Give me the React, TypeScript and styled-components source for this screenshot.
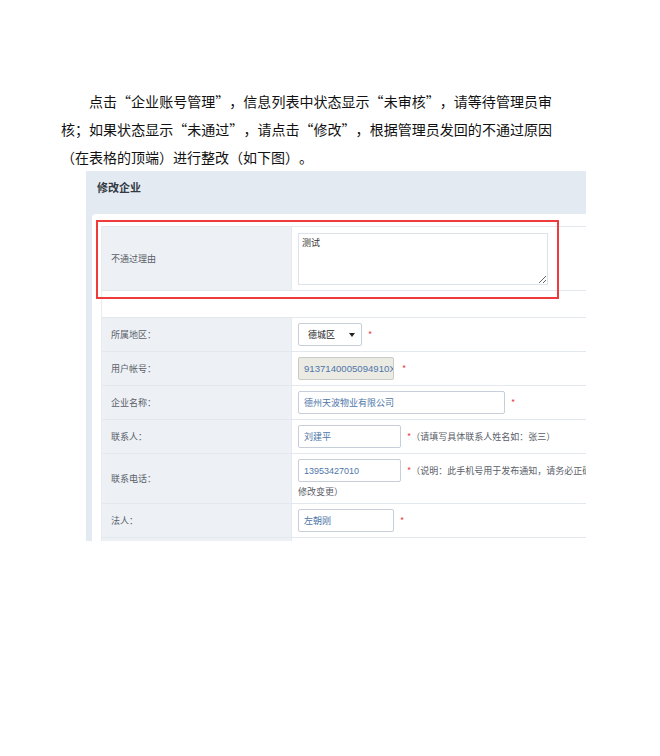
import styled, { createGlobalStyle } from "styled-components";

const GlobalStyle = createGlobalStyle`
  html, body {
    margin: 0;
    padding: 0;
    background: #ffffff;
  }
  body {
    font-family: "Noto Sans CJK SC", "Noto Sans", sans-serif;
    text-spacing-trim: space-all;
  }
`;

const Page = styled.div`
  width: 660px;
  min-height: 756px;
  padding-top: 87px;
  box-sizing: border-box;
`;

const Paragraph = styled.p`
  margin: 0 0 0 61px;
  width: 491px;
  font-size: 14px;
  line-height: 28px;
  text-indent: 28px;
  text-align: justify;
  color: #111;
`;

const Shot = styled.div`
  margin-left: 86px;
  width: 500px;
  height: 370px;
  overflow: hidden;
  background: #e4eaf2;
`;

const ShotHeader = styled.div`
  height: 43px;
  padding-left: 11px;
  box-sizing: border-box;
`;

const ShotTitle = styled.h3`
  margin: 0;
  font-size: 11px;
  line-height: 32px;
  font-weight: 700;
  color: #333a44;
`;

const Panel = styled.div`
  position: relative;
  margin-left: 6px;
  padding: 12px 0 0 9px;
  background: #ffffff;
  border-top-left-radius: 4px;
  height: 327px;
  box-sizing: border-box;
`;

const Highlight = styled.div`
  position: absolute;
  left: 4px;
  top: 6px;
  width: 463px;
  height: 79px;
  border: 2px solid #ef3b3b;
  box-sizing: border-box;
  pointer-events: none;
`;

const FormTable = styled.div`
  width: 640px;
  border-top: 1px solid #e3e7ee;
  border-left: 1px solid #e8ebf0;
`;

const Row = styled.div<{ $h: number }>`
  display: grid;
  grid-template-columns: 190px 1fr;
  min-height: ${(p) => p.$h}px;
  border-bottom: 1px solid #e3e7ee;
`;

const Label = styled.div<{ $blank?: boolean }>`
  display: flex;
  align-items: center;
  padding-left: 9px;
  background: ${(p) => (p.$blank ? "#ffffff" : "#edf1f6")};
  border-right: 1px solid ${(p) => (p.$blank ? "transparent" : "#e6e9ef")};
  font-size: 9px;
  color: #5a6068;
`;

const Value = styled.div<{ $col?: boolean }>`
  display: flex;
  flex-direction: ${(p) => (p.$col ? "column" : "row")};
  align-items: ${(p) => (p.$col ? "flex-start" : "center")};
  padding: 0 6px;
  padding-top: ${(p) => (p.$col ? "5px" : "0")};
  font-size: 9px;
  color: #5a6068;
`;

const Line = styled.div`
  display: flex;
  align-items: center;
  white-space: nowrap;
`;

const Reason = styled.textarea`
  width: 250px;
  height: 52px;
  margin: 0;
  padding: 3px 3px;
  box-sizing: border-box;
  border: 1px solid #dde3ec;
  font-family: "Noto Sans CJK SC", sans-serif;
  font-size: 9px;
  line-height: 12px;
  color: #333;
  resize: both;
  outline: none;
`;

const SelectBox = styled.div`
  display: flex;
  align-items: center;
  justify-content: space-between;
  width: 64px;
  height: 23px;
  padding: 0 6px 0 9px;
  box-sizing: border-box;
  border: 1px solid #c6ceda;
  border-radius: 2px;
  font-size: 9px;
  color: #222;

  &::after {
    content: "";
    border-left: 3px solid transparent;
    border-right: 3px solid transparent;
    border-top: 4px solid #222;
  }
`;

const Field = styled.div<{ $w: number; $disabled?: boolean; $size?: number }>`
  display: flex;
  align-items: center;
  width: ${(p) => p.$w}px;
  height: 23px;
  padding-left: 5px;
  box-sizing: border-box;
  overflow: hidden;
  white-space: nowrap;
  border: 1px solid ${(p) => (p.$disabled ? "#c9cbc6" : "#c6ceda")};
  border-radius: 2px;
  background: ${(p) => (p.$disabled ? "#ebebe4" : "#ffffff")};
  font-family: "Liberation Sans", "Noto Sans CJK SC", sans-serif;
  font-size: ${(p) => p.$size ?? 9}px;
  color: #4e76a9;
`;

const Star = styled.span<{ $gap?: number }>`
  margin-left: ${(p) => p.$gap ?? 6}px;
  color: #e84545;
  font-size: 9px;
`;

const Hint = styled.span`
  color: #5a6068;
  font-size: 9px;
`;

const Wrapped = styled.div`
  margin-top: 4px;
  line-height: 12px;
  color: #5a6068;
`;

export default function App() {
  return (
    <Page>
      <GlobalStyle />
      <Paragraph>
        点击“企业账号管理”，信息列表中状态显示“未审核”，请等待管理员审核；如果状态显示“未通过”，请点击“修改”，根据管理员发回的不通过原因（在表格的顶端）进行整改（如下图）。
      </Paragraph>

      <Shot>
        <ShotHeader>
          <ShotTitle>修改企业</ShotTitle>
        </ShotHeader>
        <Panel>
          <FormTable>
            <Row $h={63}>
              <Label>不通过理由</Label>
              <Value>
                <Reason defaultValue="测试" readOnly />
              </Value>
            </Row>
            <Row $h={26}>
              <Label $blank />
              <Value />
            </Row>
            <Row $h={33}>
              <Label>所属地区：</Label>
              <Value>
                <SelectBox>德城区</SelectBox>
                <Star>*</Star>
              </Value>
            </Row>
            <Row $h={33}>
              <Label>用户帐号：</Label>
              <Value>
                <Field $w={96} $disabled $size={9.6}>
                  9137140005094910X8
                </Field>
                <Star $gap={8}>*</Star>
              </Value>
            </Row>
            <Row $h={33}>
              <Label>企业名称：</Label>
              <Value>
                <Field $w={207}>德州天波物业有限公司</Field>
                <Star>*</Star>
              </Value>
            </Row>
            <Row $h={33}>
              <Label>联系人：</Label>
              <Value>
                <Field $w={103}>刘建平</Field>
                <Star>*</Star>
                <Hint>（请填写具体联系人姓名如：张三）</Hint>
              </Value>
            </Row>
            <Row $h={49}>
              <Label>联系电话：</Label>
              <Value $col>
                <Line>
                  <Field $w={103}>13953427010</Field>
                  <Star>*</Star>
                  <Hint>（说明：此手机号用于发布通知，请务必正确填写，如有变动请及时</Hint>
                </Line>
                <Wrapped>修改变更）</Wrapped>
              </Value>
            </Row>
            <Row $h={33}>
              <Label>法人：</Label>
              <Value>
                <Field $w={96}>左朝刚</Field>
                <Star>*</Star>
              </Value>
            </Row>
            <Row $h={33}>
              <Label />
              <Value />
            </Row>
          </FormTable>
          <Highlight />
        </Panel>
      </Shot>
    </Page>
  );
}
